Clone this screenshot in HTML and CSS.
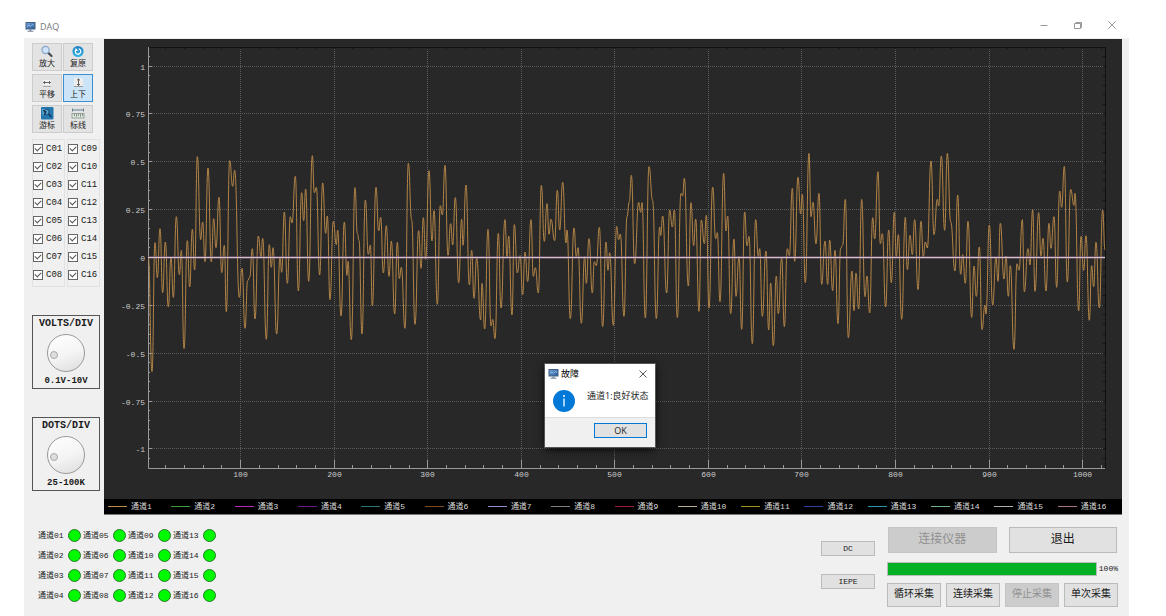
FILE: index.html
```html
<!DOCTYPE html>
<html lang="zh-CN">
<head>
<meta charset="utf-8">
<title>DAQ</title>
<link rel="stylesheet" href="styles.css">
</head>
<body>
<svg class="defs" aria-hidden="true">
  <defs>
    <linearGradient id="screen" x1="0" y1="0" x2="1" y2="1">
      <stop offset="0" stop-color="#6d9fd6"/><stop offset="1" stop-color="#2b5c9c"/>
    </linearGradient>
    <linearGradient id="blue" x1="0" y1="0" x2="0" y2="1">
      <stop offset="0" stop-color="#1f7fc0"/><stop offset="1" stop-color="#35b6e8"/>
    </linearGradient>
    <symbol id="monitor" viewBox="0 0 11 12">
      <rect x="0.5" y="1" width="10" height="7.5" fill="#44607f"/>
      <rect x="1.5" y="2" width="8" height="5.5" fill="url(#screen)"/>
      <path d="M2 5.5l2-1.5 1.5 1.5 2-2 1.5 1" fill="none" stroke="#a9d0f2" stroke-width=".7"/>
      <path d="M4.5 8.5h2v1.3h2v1h-6v-1h2z" fill="#7888a0"/>
    </symbol>
  </defs>
</svg>
<div class="window">
  <header class="titlebar">
    <svg class="app-icon"><use href="#monitor"/></svg>
    <h1 class="title">DAQ</h1>
    <button class="win-btn" aria-label="最小化"><svg viewBox="0 0 10 10"><path d="M1.500 5.500h7"/></svg></button>
    <button class="win-btn" aria-label="最大化"><svg viewBox="0 0 10 10"><path d="M1.500 3.500h6v5h-6zM3 3.500v-1h5.500v5h-1"/></svg></button>
    <button class="win-btn" aria-label="关闭"><svg viewBox="0 0 10 10"><path d="M1.500 1.500l7 7m0-7l-7 7"/></svg></button>
  </header>

  <main class="workspace">
    <aside class="sidebar">
      <div class="tools">
        <button class="tool"><svg viewBox="0 0 14 13"><path d="M8 7.500l3.500 3.500" stroke="#404850" stroke-width="2.200" stroke-linecap="round"/><circle cx="5.500" cy="5" r="3.600" fill="#cfe4fa" stroke="#8ba7c8" stroke-width="1.200"/></svg><span>放大</span></button>
        <button class="tool"><svg viewBox="0 0 14 13"><circle cx="7" cy="6.500" r="5.600" fill="url(#blue)"/><path d="M4.600 5.300a2.700 2.700 0 1 0 3-1.500" fill="none" stroke="#fff" stroke-width="1.200"/><path d="M3.600 6.200l3.400-.4L4.800 3z" fill="#fff"/></svg><span>复原</span></button>
        <button class="tool"><svg viewBox="0 0 14 13"><path d="M3 10.500h8" stroke="#aaa"/><rect x="3" y="4" width="8" height="5" fill="#f2f2f2"/><path d="M3.500 6.500h7M5 5L3.500 6.500 5 8M9 5l1.500 1.500L9 8" fill="none" stroke="#555" stroke-width=".9"/></svg><span>平移</span></button>
        <button class="tool tool-active"><svg viewBox="0 0 14 13"><rect x="3" y="2" width="9" height="8.500" fill="#ededed"/><path d="M3 10.500h9" stroke="#999"/><path d="M7.500 3v6.500M6 4.300L7.500 3 9 4.300M6 8l1.500 1.500L9 8" fill="none" stroke="#555" stroke-width=".9"/></svg><span>上下</span></button>
        <button class="tool"><svg viewBox="0 0 14 13"><rect x="1" y="0" width="12.500" height="12.500" rx="1" fill="#2477ae"/><path d="M2 2h5L3 9z" fill="#7ac0e8"/><circle cx="6.500" cy="5" r="2.600" fill="#60a9d8" stroke="#1d4a6c"/><path d="M3 3l3 2-2 3M8.500 7l3 3" fill="none" stroke="#12334d" stroke-width="1.300"/></svg><span>游标</span></button>
        <button class="tool"><svg viewBox="0 0 14 13"><path d="M1 3h12M1.500 1.500v3M12.500 1.500v3" fill="none" stroke="#637d8d"/><rect x="1" y="6.500" width="12" height="4.500" fill="#e3e9e2" stroke="#839284" stroke-width=".8"/><path d="M3.500 7v2m2-2v2.800m2-2.800v2m2-2v2.800m2-2.800v2" stroke="#5c7060" stroke-width=".7"/></svg><span>标线</span></button>
      </div>

      <div class="channels">
        <fieldset class="channel-group" aria-label="C01–C08">
          <label><input type="checkbox" checked>C01</label>
          <label><input type="checkbox" checked>C02</label>
          <label><input type="checkbox" checked>C03</label>
          <label><input type="checkbox" checked>C04</label>
          <label><input type="checkbox" checked>C05</label>
          <label><input type="checkbox" checked>C06</label>
          <label><input type="checkbox" checked>C07</label>
          <label><input type="checkbox" checked>C08</label>
        </fieldset>
        <fieldset class="channel-group" aria-label="C09–C16">
          <label><input type="checkbox" checked>C09</label>
          <label><input type="checkbox" checked>C10</label>
          <label><input type="checkbox" checked>C11</label>
          <label><input type="checkbox" checked>C12</label>
          <label><input type="checkbox" checked>C13</label>
          <label><input type="checkbox" checked>C14</label>
          <label><input type="checkbox" checked>C15</label>
          <label><input type="checkbox" checked>C16</label>
        </fieldset>
      </div>

      <div class="dial">
        <label for="volts">VOLTS/DIV</label>
        <input id="volts" class="knob" type="range" min="0" max="10" value="0">
        <span>0.1V-10V</span>
      </div>
      <div class="dial">
        <label for="dots">DOTS/DIV</label>
        <input id="dots" class="knob" type="range" min="0" max="10" value="0">
        <span>25-100K</span>
      </div>
    </aside>

    <section class="scope">
      <svg class="plot" viewBox="0 0 1018 460" role="img" aria-label="通道1">
        <g id="axes"></g>
        <path id="trace" class="trace" transform="scale(.33333)"/>
        <path class="zero-glow" d="M44 218.500H1001"/>
        <path class="zero" d="M44 218.500H1001"/>
      </svg>
      <ul class="legend">
        <li class="c1">通道1</li><li class="c2">通道2</li><li class="c3">通道3</li><li class="c4">通道4</li>
        <li class="c5">通道5</li><li class="c6">通道6</li><li class="c7">通道7</li><li class="c8">通道8</li>
        <li class="c9">通道9</li><li class="c10">通道10</li><li class="c11">通道11</li><li class="c12">通道12</li>
        <li class="c13">通道13</li><li class="c14">通道14</li><li class="c15">通道15</li><li class="c16">通道16</li>
      </ul>

      <div class="dialog" role="dialog" aria-labelledby="dialog-title">
        <div class="dialog-head">
          <svg class="app-icon"><use href="#monitor"/></svg>
          <h2 id="dialog-title">故障</h2>
          <button class="dialog-close" aria-label="关闭"><svg viewBox="0 0 10 10"><path d="M1.500 1.500l7 7m0-7l-7 7"/></svg></button>
        </div>
        <div class="dialog-body">
          <svg class="info" viewBox="0 0 22 22"><circle cx="11" cy="11" r="11" fill="#0078d7"/><circle cx="11" cy="6" r="1" fill="#fff"/><path d="M11 8.500v8" stroke="#fff" stroke-width="1.300"/></svg>
          <p>通道1:良好状态</p>
        </div>
        <div class="dialog-foot"><button class="ok">OK</button></div>
      </div>
    </section>
  </main>

  <footer class="bottom">
    <ul class="status">
      <li>通道01</li><li>通道02</li><li>通道03</li><li>通道04</li>
      <li>通道05</li><li>通道06</li><li>通道07</li><li>通道08</li>
      <li>通道09</li><li>通道10</li><li>通道11</li><li>通道12</li>
      <li>通道13</li><li>通道14</li><li>通道15</li><li>通道16</li>
    </ul>
    <div class="modes">
      <button class="btn">DC</button>
      <button class="btn">IEPE</button>
    </div>
    <div class="controls">
      <div class="main-actions">
        <button class="btn" disabled>连接仪器</button>
        <button class="btn">退出</button>
      </div>
      <div class="progress-row">
        <progress id="progress" value="100" max="100"></progress>
        <label for="progress">100%</label>
      </div>
      <div class="actions">
        <button class="btn">循环采集</button>
        <button class="btn">连续采集</button>
        <button class="btn" disabled>停止采集</button>
        <button class="btn">单次采集</button>
      </div>
    </div>
  </footer>
</div>
<script src="plot.js"></script>
</body>
</html>
```

FILE: styles.css
```css
* { box-sizing: border-box; }

body {
  margin: 0;
  background: #fff;
  color: #1a1a1a;
  font: 8px/12px "Liberation Mono", "Noto Sans CJK SC", monospace;
}

button, input { font: inherit; color: inherit; margin: 0; }
button { padding: 0; }
ul { margin: 0; padding: 0; list-style: none; }
.defs { position: absolute; width: 0; height: 0; }

.window { margin: 16px 37px 0 24px; }

.titlebar {
  display: flex;
  align-items: center;
  height: 22px;
  padding-left: 1px;
}
.app-icon { width: 11px; height: 12px; flex: none; }
.title {
  flex: 1;
  margin: 0 0 0 4px;
  color: #777;
  font: 9px/12px "Open Sans", sans-serif;
}
.win-btn {
  width: 34px;
  height: 22px;
  border: 0;
  background: none;
}
.win-btn svg { width: 10px; height: 10px; }
.win-btn path { fill: none; stroke: #999; stroke-width: 1; }

.workspace {
  display: flex;
  padding: 1px 7px 0 0;
  background: #f0f0f0;
}

.sidebar {
  flex: none;
  width: 80px;
  padding: 4px 4px 0 8px;
}
.tools {
  display: grid;
  grid-template-columns: 30px 30px;
  gap: 3px 1px;
}
.tool {
  display: flex;
  flex-direction: column;
  align-items: center;
  height: 28px;
  padding-top: 1px;
  border: 1px solid #ccc;
  background: #e3e3e3;
  line-height: 12px;
}
.tool svg { width: 14px; height: 13px; flex: none; }
.tool-active { border-color: #3b8ed0; background: #cce4f7; }

.channels {
  display: grid;
  grid-template-columns: 1fr 1fr;
  gap: 2px;
  margin-top: 6px;
}
.channel-group {
  min-width: 0;
  margin: 0;
  padding: 0 0 2px;
  border: 1px solid #e2e2e2;
}
.channel-group label {
  display: flex;
  align-items: center;
  gap: 3px;
  height: 18px;
  font-size: 9px;
}
.channel-group input {
  flex: none;
  width: 10px;
  height: 10px;
  appearance: none;
  border: 1px solid #666;
  background: #fff;
}
.channel-group input:checked::after {
  content: "";
  display: block;
  width: 5px;
  height: 3px;
  margin: 1px;
  border: solid #555;
  border-width: 0 0 1px 1px;
  transform: rotate(-45deg);
}

.dial {
  display: flex;
  flex-direction: column;
  align-items: center;
  justify-content: space-between;
  height: 74px;
  margin-top: 28px;
  padding: 2px 0 1px;
  border: 1px solid #555;
  font-weight: bold;
  font-size: 9px;
}
.dial label { font-size: 10px; line-height: 12px; }
.knob {
  width: 38px;
  height: 38px;
  padding: 4px 2px 0;
  appearance: none;
  border: 1px solid #999;
  border-radius: 50%;
  background: linear-gradient(160deg, #fff, #f4f4f4 55%, #dcdcdc);
}
.knob::-webkit-slider-thumb {
  width: 8px;
  height: 8px;
  appearance: none;
  border: 1px solid #aaa;
  border-radius: 50%;
  background: #ddd;
}

.scope {
  position: relative;
  flex: 1;
  min-width: 0;
  border-bottom: 1px solid #777;
  background: #282828;
}
.plot { display: block; width: 100%; height: auto; }
.plot text { fill: #ccc; font-size: 8px; }
.plot .y-label { text-anchor: end; }
.plot .x-label { text-anchor: middle; }
.grid { fill: none; stroke: #5c5c5c; stroke-dasharray: 1 1; }
.frame { fill: none; stroke: #111; }
.axis { fill: none; stroke: #999; }
.trace { fill: none; stroke: #b38546; stroke-width: 3; stroke-linejoin: round; }
.zero { stroke: #d8c0d0; }
.zero-glow { stroke: #8a6c88; stroke-width: 2; }

.legend {
  display: grid;
  grid-template-columns: repeat(16, 1fr);
  height: 15px;
  padding: 0 1px 0 4px;
  background: #000;
  color: #ddd;
}
.legend li { display: flex; align-items: center; gap: 4px; white-space: nowrap; }
.legend li::before { content: ""; width: 19px; height: 1px; background: currentColor; }
.legend .c1::before { background: #b88b48; }
.legend .c2::before { background: #3c9a3c; }
.legend .c3::before { background: #b82ab8; }
.legend .c4::before { background: #6a1a86; }
.legend .c5::before { background: #2d7474; }
.legend .c6::before { background: #7c4a1c; }
.legend .c7::before { background: #9a8cc8; }
.legend .c8::before { background: #808080; }
.legend .c9::before { background: #a01c3c; }
.legend .c10::before { background: #b8b090; }
.legend .c11::before { background: #a09420; }
.legend .c12::before { background: #3040a0; }
.legend .c13::before { background: #2898a8; }
.legend .c14::before { background: #70b088; }
.legend .c15::before { background: #b0b0b0; }
.legend .c16::before { background: #a87888; }

.dialog {
  position: absolute;
  left: 441px;
  top: 325px;
  width: 110px;
  background: #fff;
  box-shadow: 0 0 0 1px #555, 0 2px 8px #000;
  color: #222;
  font: 9px/12px "Open Sans", "Noto Sans CJK SC", sans-serif;
}
.dialog-head { display: flex; align-items: center; height: 19px; padding: 0 7px 0 3px; }
.dialog-head h2 { flex: 1; margin: 0 0 0 2px; font: inherit; color: #000; }
.dialog-close { width: 10px; height: 10px; border: 0; background: none; }
.dialog-close svg { display: block; width: 10px; height: 10px; }
.dialog-close path { fill: none; stroke: #555; }
.dialog-body { display: flex; gap: 12px; height: 34px; padding: 7px 0 0 8px; }
.dialog-body p { margin: 0; white-space: nowrap; }
.info { width: 22px; height: 22px; flex: none; }
.dialog-foot {
  display: flex;
  justify-content: flex-end;
  height: 30px;
  padding: 5px 8px 9px;
  border-top: 1px solid #ddd;
  background: #f0f0f0;
}
.ok { width: 53px; border: 1px solid #0078d7; background: #e1e1e1; line-height: 12px; }

.bottom {
  display: flex;
  align-items: flex-start;
  min-height: 102px;
  padding: 12px 11px 8px 14px;
  background: #f0f0f0;
}
.status {
  display: grid;
  grid-auto-flow: column;
  grid-template-rows: repeat(4, 19px);
  grid-auto-columns: 45px;
  row-gap: 1px;
  margin: -1px auto 0 0;
}
.status li { display: flex; align-items: center; gap: 4px; white-space: nowrap; }
.status li::after {
  content: "";
  flex: none;
  width: 11px;
  height: 11px;
  border: 1px solid #297a29;
  border-radius: 50%;
  background: #00fb00;
}

.btn { border: 1px solid #bbb; background: #e1e1e1; }
.btn:disabled { border-color: #c4c4c4; background: #ccc; color: #909090; }

.modes { display: grid; gap: 18px; width: 54px; margin: 14px 12px 0 0; }
.modes .btn { height: 15px; line-height: 12px; }

.controls { width: 231px; }
.main-actions { display: grid; grid-template-columns: 1fr 1fr; gap: 12px; padding: 0 1px; }
.main-actions .btn { height: 26px; font-size: 12px; }
.progress-row { display: flex; align-items: center; gap: 2px; margin: 9px 0 7px; }
.progress-row progress {
  flex: 1;
  height: 14px;
  appearance: none;
  border: 1px solid #bbb;
  background: #e6e6e6;
}
.progress-row progress::-webkit-progress-bar { background: #e6e6e6; }
.progress-row progress::-webkit-progress-value { background: #06b025; }
.progress-row label { line-height: 14px; }
.actions { display: grid; grid-template-columns: repeat(4, 1fr); gap: 5px; }
.actions .btn { height: 24px; font-size: 10px; }
```

FILE: plot.js
```js
const NS = "http://www.w3.org/2000/svg";
const axes = document.getElementById("axes");
const left = 44, right = 1001, top_ = 8, bottom = 429;
const zeroY = 218.5, yStep = 47.85, xStep = 93.55;
const snap = v => Math.floor(v) + 0.5;

function add(tag, cls, attrs, text) {
  const el = document.createElementNS(NS, tag);
  el.setAttribute("class", cls);
  for (const k in attrs) el.setAttribute(k, attrs[k]);
  if (text) el.textContent = text;
  axes.appendChild(el);
}

let grid = "", ticks = "", frame = `M${left} ${top_ + 0.5}H${right + 0.5}V${bottom}`;
for (let i = -4; i <= 4; i++) {
  const y = snap(zeroY - i * yStep);
  grid += `M${left} ${y}H${right}`;
  add("text", "y-label", { x: 41, y: y + 3 }, String(i / 4));
}
for (let i = 1; i <= 10; i++) {
  const x = snap(left + i * xStep - 0.9);
  grid += `M${x} ${top_}V${bottom}`;
  ticks += `M${x} ${bottom}v-8`;
  add("text", "x-label", { x, y: 438 }, String(i * 100));
}
for (let i = -21; i <= 21; i++) {
  const y = snap(zeroY - i * yStep / 5);
  ticks += `M${left} ${y}h${i % 5 ? 2 : 4}`;
  frame += `M${right} ${y}h-2`;
}
for (let i = 1; i <= 51; i++) {
  const x = snap(left + i * xStep / 5 - 0.9);
  ticks += `M${x} ${bottom}v-3`;
  frame += `M${x} ${top_}v2`;
}
add("path", "grid", { d: grid });
add("path", "frame", { d: frame });
add("path", "axis", { d: ticks + `M${left}.5 ${top_}V${bottom}.5H${right}` });

// Turning points of the signal, in blocks that each have their own origin.
const blocks = [
  [-12, 3, "145,652 156,995 165,608 172,713 180,566 188,758 196,606 205,801 213,652 220,772 229,530 238,704 244,631 252,926 262,602 269,741 277,568 284,690 292,350 302,599 308,546 315,665 324,384 334,666 341,536 348,623 357,472 365,698 373,616 379,815 389,362 398,439 404,391 418,772 426,685 435,865 443,722 449,712 457,626 465,837 475,588 483,652 488,595 499,898 508,614 514,682 519,623 530,882 540,654 545,697 553,516 562,730 571,530 576,549 586,409 595,753 605,458 611,542 617,447 626,724 637,347 643,458 649,442 659,705 668,429 677,580 682,528 690,779 700,544 709,614 713,570 723,828 733,546 741,706 744,664 754,899 765,443 772,580 777,601"],
  [768, 273, "6,612 16,210 25,373 31,345 37,528 48,172 56,303 62,262 70,429 79,287 87,439 94,333 104,552 112,337 118,446 124,412 135,595 145,100 155,270 165,583 176,302 183,415 190,263 197,388 207,122 216,333 222,242 232,523 241,227 247,255 255,106 264,376 272,281 278,345 286,203 296,458 305,268 309,346 318,165 328,465 335,361 342,505 350,384 362,570 366,460 374,597 384,298 393,588 398,568 405,626 415,310 423,534 435,269 441,384 446,318 456,555 463,284 472,429 480,377 488,494 495,366 503,455 513,269 520,439 526,413 535,489 544,166 553,334 561,221 567,313 573,268 584,332 592,181 599,300 608,157 618,339 621,300 631,566 642,294 649,379 654,353 664,580 674,380 679,460 687,326 697,489 703,395 709,407 718,292 728,590 738,336 744,421 749,368"],
  [1518, 273, "10,586 20,289 26,329 31,312 42,559 51,260 58,215 64,136 74,401 86,217 92,247 96,218 106,564 117,110 128,212 139,566 149,291 152,317 158,258 170,489 179,240 187,291 193,240 202,563 213,190 218,198 223,145 235,468 243,218 251,347 257,267 267,544 274,270 283,341 289,256 297,534 308,171 317,326 322,308 330,515 341,130 348,303 353,258 362,551 372,327 378,499 387,379 395,598 404,246 411,348 417,319 427,641 437,269 445,380 449,356 457,559 468,363 476,600 482,459 490,647 499,438 505,551 515,384 523,590 532,356 538,377 547,175 554,394 564,142 572,252 577,193 586,458 597,70 603,260 609,217 618,341 627,190 635,463 645,333 653,463 659,330 668,482 675,361 684,581 692,355 698,345 706,208 715,623 726,423 732,542 738,429 746,537"],
  [2268, 273, "5,208 15,500 21,438 29,549 38,263 44,327 54,125 61,341 67,311 77,531 86,300 94,458 103,247 109,380 115,314 125,568 136,262 142,419 150,316 157,374 164,269 174,479 183,274 190,380 196,336 202,354 213,93 222,314 232,208 236,228 244,78 254,301 262,70 272,275 285,423 293,195 302,433 308,374 316,460 324,274 335,562 342,408 349,499 358,351 366,599 375,525 378,552 388,285 398,525 408,382 414,454 421,280 432,447 438,378 445,499 451,407 462,658 471,401 477,421 487,269 493,485 504,356 510,405 518,239 525,484 536,248 543,378 549,325 558,483 567,280 573,355 582,260 590,472 599,183 605,232 613,109 622,456 632,178 642,226 645,190 656,543 663,319 671,421 678,317 688,571 695,407 701,470 708,337 718,534 728,240 735,360"]
];
const points = blocks.flatMap(([ox, oy, list]) =>
  list.split(" ").map(pair => {
    const [x, y] = pair.split(",").map(Number);
    return [x + ox, y + oy];
  }));
// Flat tangents at each turning point round off the peaks.
document.getElementById("trace").setAttribute("d", points.map(([x, y], i) => {
  if (!i) return `M${x} ${y}`;
  const [px, py] = points[i - 1], mid = (px + x) / 2;
  return `C${mid} ${py} ${mid} ${y} ${x} ${y}`;
}).join(""));
```
